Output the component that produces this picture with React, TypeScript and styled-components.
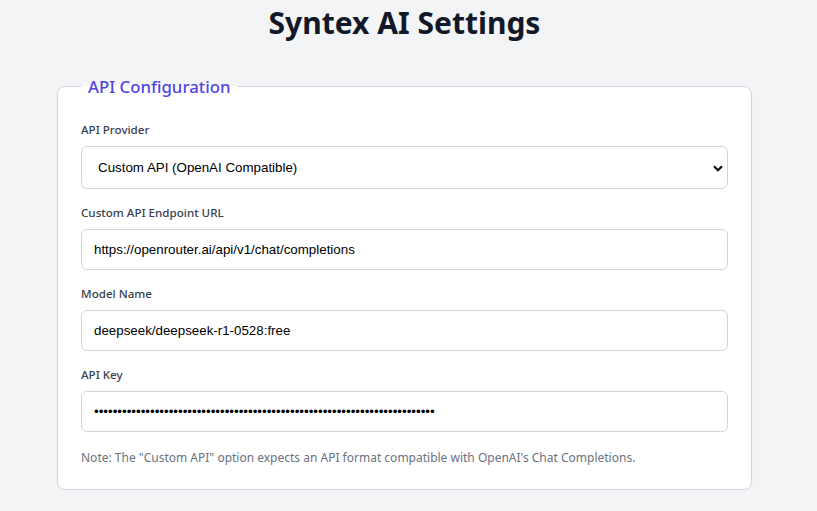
import React from 'react';
import styled, { createGlobalStyle } from 'styled-components';

const GlobalStyle = createGlobalStyle`
    html, body {
        margin: 0;
        padding: 0;
        background-color: #F3F4F6;
    }
    body {
        font-family: "Noto Sans", "Open Sans", sans-serif;
        color: #111827;
    }
`;

const Page = styled.div`
    padding: 0 65px 0 57px;
`;

const Title = styled.h1`
    margin: 0 0 32px 0;
    padding-top: 2px;
    text-align: center;
    font-size: 30px;
    line-height: 41px;
    font-weight: 700;
    color: #111827;
`;

const Panel = styled.fieldset`
    margin: 0;
    padding: 22px 23px 22px 23px;
    background-color: #FFFFFF;
    border: 1px solid #D1D5DB;
    border-radius: 8px;
    box-shadow: 0 1px 2px rgba(0, 0, 0, 0.05);
`;

const PanelLegend = styled.legend`
    padding: 0 7px;
    font-size: 16.8px;
    font-weight: 500;
    color: #4F46E5;
`;

const FieldGroup = styled.div`
    display: flex;
    flex-direction: column;
    margin-bottom: 14px;
`;

const FieldLabel = styled.label`
    display: block;
    margin-bottom: 6px;
    font-size: 11.6px;
    line-height: 20px;
    font-weight: 500;
    color: #374151;
`;

const fieldBase = `
    box-sizing: border-box;
    width: 100%;
    height: 41px;
    padding: 0 12px;
    border: 1px solid #D1D5DB;
    border-radius: 6px;
    background-color: #FFFFFF;
    font-family: "Liberation Sans", Arial, sans-serif;
    font-size: 13.333px;
    color: #000000;
    outline: none;
`;

const TextInput = styled.input`
    ${fieldBase}
`;

const SelectWrap = styled.div`
    position: relative;
`;

const Select = styled.select`
    ${fieldBase}
    height: 43px;
    appearance: none;
    padding-left: 16px;
    padding-right: 32px;
`;

const Chevron = styled.svg`
    position: absolute;
    right: 5px;
    top: 50%;
    width: 10px;
    height: 7px;
    margin-top: -3px;
    pointer-events: none;
`;

const Note = styled.p`
    margin: 17px 0 0 0;
    font-size: 12px;
    line-height: 18px;
    color: #6B7280;
`;

const App: React.FC = () => {
    return (
        <Page>
            <GlobalStyle />
            <Title>Syntex AI Settings</Title>
            <Panel>
                <PanelLegend>API Configuration</PanelLegend>
                <FieldGroup>
                    <FieldLabel htmlFor="provider">API Provider</FieldLabel>
                    <SelectWrap>
                        <Select id="provider" defaultValue="custom">
                            <option value="custom">Custom API (OpenAI Compatible)</option>
                        </Select>
                        <Chevron viewBox="0 0 10 7">
                            <path d="M1 1.2 L5 5.2 L9 1.2" fill="none" stroke="#111111" strokeWidth="2.2" />
                        </Chevron>
                    </SelectWrap>
                </FieldGroup>
                <FieldGroup>
                    <FieldLabel htmlFor="endpoint">Custom API Endpoint URL</FieldLabel>
                    <TextInput id="endpoint" type="text" defaultValue="https://openrouter.ai/api/v1/chat/completions" />
                </FieldGroup>
                <FieldGroup>
                    <FieldLabel htmlFor="model">Model Name</FieldLabel>
                    <TextInput id="model" type="text" defaultValue="deepseek/deepseek-r1-0528:free" />
                </FieldGroup>
                <FieldGroup>
                    <FieldLabel htmlFor="apikey">API Key</FieldLabel>
                    <TextInput id="apikey" type="password" defaultValue={'sk-or-v1-' + 'a'.repeat(64)} />
                </FieldGroup>
                <Note>Note: The "Custom API" option expects an API format compatible with OpenAI's Chat Completions.</Note>
            </Panel>
        </Page>
    );
};

export default App;
